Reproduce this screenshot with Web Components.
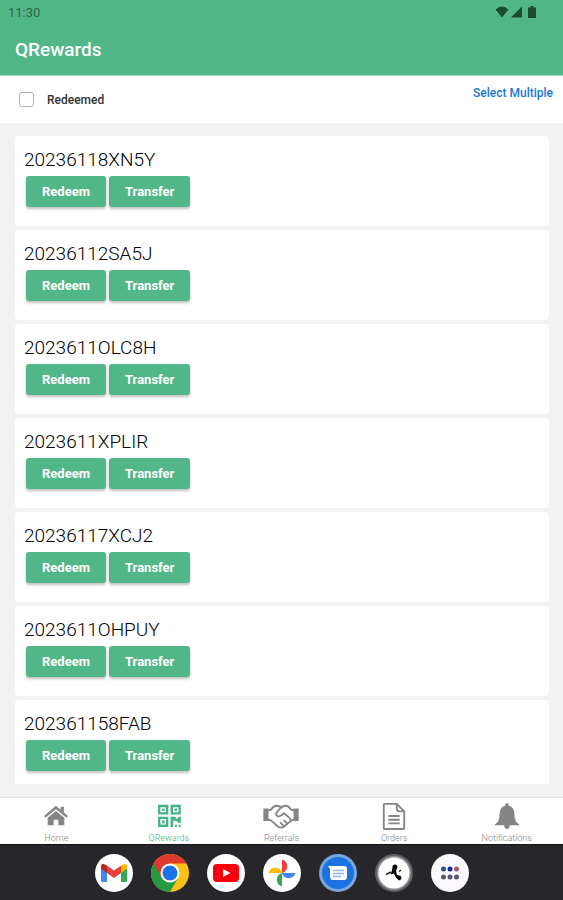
<!DOCTYPE html>
<html lang="en">
<head>
<meta charset="utf-8">
<meta name="viewport" content="width=device-width, initial-scale=1">
<title>QRewards</title>
<style>
  body {
    margin: 0;
    font-family: Roboto, "Liberation Sans", sans-serif;
    background: #f2f2f2;
  }
</style>
</head>
<body>
<rewards-app></rewards-app>

<script>
function define(name, html, setup) {
  const template = document.createElement('template');
  template.innerHTML = html;

  customElements.define(name, class extends HTMLElement {
    constructor() {
      super();
      this.attachShadow({ mode: 'open' });
      this.shadowRoot.appendChild(template.content.cloneNode(true));
    }

    connectedCallback() {
      if (setup) setup(this, this.shadowRoot);
    }
  });
}

define('app-header', `
  <style>
    :host {
      display: block;
      height: 76px;
      box-sizing: border-box;
      background: #52b788;
      border-bottom: 1px solid #a0d5bb;
    }
    .status {
      display: flex;
      align-items: center;
      justify-content: space-between;
      height: 24px;
      padding: 0 24px 0 8px;
      font-size: 13px;
      color: #2c6a4c;
    }
    svg { display: block; fill: #1d4a33; }
    h1 {
      margin: 0;
      padding: 0 15px;
      font-size: 19px;
      font-weight: 500;
      line-height: 52px;
      color: #fff;
    }
  </style>
  <div class="status">
    <span>11:30</span>
    <svg width="44" height="14" viewBox="0 0 44 14" aria-hidden="true">
      <path d="M0.500 4.500Q7-1.500 13.500 4.500L7 12.500Z"/>
      <path d="M27 1.500V12.500H16Z"/>
      <path d="M35.500 1h3v1.500h2.500v10.500h-8V2.500h2.500z"/>
    </svg>
  </div>
  <h1><slot></slot></h1>
`);

define('filter-bar', `
  <style>
    :host {
      display: flex;
      justify-content: space-between;
      height: 47px;
      padding: 0 10px 0 19px;
      background: #fff;
    }
    label {
      display: flex;
      align-items: center;
      gap: 13px;
      font-size: 12px;
      font-weight: 500;
      color: #333;
    }
    input {
      appearance: none;
      width: 15px;
      height: 15px;
      margin: 0;
      border: 1px solid #b4b4b4;
      border-radius: 3px;
      background: #fff;
    }
    input:checked { background: #52b788; }
    a {
      padding-top: 8px;
      font-size: 12px;
      font-weight: 500;
      line-height: 18px;
      color: #1976d2;
      text-decoration: none;
    }
  </style>
  <label><input type="checkbox">Redeemed</label>
  <a href="#select">Select Multiple</a>
`);

define('reward-button', `
  <style>
    :host { display: block; }
    button {
      display: block;
      height: 31px;
      padding: 0 16px;
      border: 0;
      border-radius: 3px;
      background: #52b788;
      box-shadow: 0 2px 3px rgba(0, 0, 0, 0.25);
      color: #fff;
      font: 700 13px/31px Roboto, "Liberation Sans", sans-serif;
    }
  </style>
  <button type="button"><slot></slot></button>
`);

define('reward-card', `
  <style>
    :host {
      display: block;
      flex: none;
      height: 90px;
      padding: 13px 9px 0;
      box-sizing: border-box;
      border-radius: 4px;
      background: #fff;
    }
    h2 {
      margin: 0;
      font-size: 19px;
      font-weight: 300;
      line-height: 22px;
      color: #000;
    }
    .actions {
      display: flex;
      gap: 3px;
      padding: 5px 2px;
    }
  </style>
  <h2><slot></slot></h2>
  <div class="actions">
    <reward-button>Redeem</reward-button>
    <reward-button>Transfer</reward-button>
  </div>
`);

define('reward-list', `
  <style>
    :host {
      display: flex;
      flex: 1;
      flex-direction: column;
      gap: 4px;
      min-height: 0;
      margin: 13px 14px 13px 15px;
      overflow: hidden;
    }
  </style>
  <slot></slot>
`);

const tabIcons = {
  home: `<path fill="currentColor" d="M14 2 1 13l1.800 2L14 5.600 25.200 15l1.800-2-4.500-3.900V3h-3.500v3.200z"/>
    <path fill="currentColor" d="M14 7.500 5 15v8h6.500v-6h5v6H23v-8z"/>`,
  qr: `<g fill="none" stroke="currentColor" stroke-width="2.500">
      <path d="M3.500 2.200h8.500v8H3.500zM17 2.200h8.500v8H17zM3.500 15h8.500v8.500H3.500z"/></g>
    <path fill="currentColor" d="M6.700 5h2.500v2.500H6.700zM20 5h2.500v2.500H20zM6.700 17.500h2.500v3.500H6.700zM15.700 13.800h5l2 3 1.500-3h2.500v6.500h-3l-2-2.300h-3.200v6.800h-2.800zM20.500 22.300h2v2.500h-2zM24.300 22.300h2.400v2.500h-2.400z"/>`,
  hands: `<path fill="currentColor" d="M-5 5h5.500v13.500H-5zM27.500 5H33v13.500h-5.500z"/>
    <g fill="none" stroke="currentColor" stroke-width="2" stroke-linejoin="round" stroke-linecap="round">
      <path d="M.5 7 3.500 6Q6 2 9.500 2q3 0 4.500 2 2-2 5-2 3.500 0 5.500 4l3 1"/>
      <path d="m.5 17 3 1 7.500 6.500q3 2 6 0l8-6.500 2.500-1"/>
      <path d="m14 4-5 5.500q-1 4 3 4 2.500-.500 5-3.500 6 4 8 8M20.500 21l-3-3M17 24l-3.500-3.500"/></g>`,
  page: `<path fill="#fff" stroke="currentColor" stroke-width="2" stroke-linejoin="round" d="M4 0h13l8 8v18q0 1-1 1H4q-1 0-1-1V1q0-1 1-1z"/>
    <path fill="none" stroke="currentColor" stroke-width="2" d="M17 0v5q0 3 3 3h5M8 13h12M8 17h12M8 21h12"/>`,
  bell: `<path fill="currentColor" d="M14-1q2 0 2 3 6 1.500 6 9 0 8 5 11v1H17q0 4-3 4t-3-4H1v-1q5-3 5-11 0-7.500 6-9 0-3 2-3z"/>`
};

define('tab-item', `
  <style>
    :host { display: block; color: #858585; }
    :host([active]) { color: #43b384; }
    a {
      display: flex;
      flex-direction: column;
      align-items: center;
      gap: 4px;
      padding-top: 5px;
      color: inherit;
      font-size: 9px;
      font-weight: 300;
      line-height: 11px;
      text-decoration: none;
    }
    svg { display: block; overflow: visible; }
  </style>
  <a href="#"><svg width="26" height="26" viewBox="0 0 28 26" aria-hidden="true"></svg><span><slot></slot></span></a>
`, (el, root) => {
  root.querySelector('svg').innerHTML = tabIcons[el.getAttribute('icon')];
});

define('tab-bar', `
  <style>
    :host {
      display: grid;
      grid-template-columns: repeat(5, 1fr);
      height: 47px;
      box-sizing: border-box;
      border-top: 1px solid #e2e2e2;
      background: #fff;
    }
  </style>
  <slot></slot>
`);

const dockIcons = {
  Gmail: `<circle cx="20" cy="20" r="19" fill="#fff"/>
    <path fill="#4285f4" d="M7 14v13.500q0 1.500 1.500 1.500H13V18z"/>
    <path fill="#34a853" d="M27 18v11h4.500q1.500 0 1.500-1.500V14z"/>
    <path fill="#fbbc04" d="M27 12.500V20l6-4.500V13q0-2-2-2.300z"/>
    <path fill="#c5221f" d="M7 15.500V13q0-2 2-2.300l4 1.800V20z"/>
    <path fill="#ea4335" d="M13 20v-7.500l-3-2 10 7 10-7-3 2V20l-7 5z"/>`,
  Chrome: `<circle cx="20" cy="20" r="19" fill="#fbc116"/>
    <path fill="#249a41" d="M3.550 10.500A19 19 0 0 0 20 39l8.200-14.300L20 20z"/>
    <path fill="#db3a2c" d="M3.550 10.500a19 19 0 0 1 32.900 0H20v9.500l-8.200 4.700z"/>
    <circle cx="20" cy="20" r="9.500" fill="#fff"/><circle cx="20" cy="20" r="7.500" fill="#1a73e8"/>`,
  YouTube: `<circle cx="20" cy="20" r="19" fill="#fff"/>
    <rect x="7" y="11" width="26" height="18" rx="4" fill="#f8000c"/><path fill="#fff" d="m17 16 7.500 4-7.500 4z"/>`,
  Photos: `<circle cx="20" cy="20" r="19" fill="#fff"/>
    <path fill="#ea4335" d="M20 6.500a7 7 0 0 1 0 13.500z"/><path fill="#4285f4" d="M33.500 20a7 7 0 0 1-13.500 0z"/>
    <path fill="#34a853" d="M20 33.500a7 7 0 0 1 0-13.500z"/><path fill="#fbbc04" d="M6.500 20a7 7 0 0 1 13.500 0z"/>`,
  Messages: `<circle cx="20" cy="20" r="19" fill="#7aa6dd"/><circle cx="20" cy="20" r="16" fill="#1b72e0"/>
    <path fill="#fff" d="M10 13h16q3 0 3 3v8q0 3-3 3H15q-3 0-3-3v-8z"/>
    <path stroke="#8bb6f0" stroke-width="1.500" d="M15 17.500h11M15 20.500h11M15 23.500h8"/>`,
  Runner: `<circle cx="20" cy="20" r="19" fill="#606166"/><circle cx="20" cy="20" r="17" fill="#97989b"/><circle cx="20" cy="20" r="15.500" fill="#fff"/>
    <path d="M18.500 14q0-2.500 2.500-2.500t2.500 2.500l-1.500 4 1 4 4 1 .5 3-2.500 1.500-3-3-2-4-3.500 1 1.500-4z"/>
    <path fill="none" stroke="#222" stroke-width="1.500" d="m12 21.500 5-2.500M25 18.500l2-1.500"/>`,
  Apps: `<circle cx="20" cy="20" r="19" fill="#fbf9ff"/>
    <g fill="#555873"><circle cx="13.500" cy="24" r="2.500"/><circle cx="20" cy="24" r="2.500"/><circle cx="26.500" cy="24" r="2.500"/></g>
    <circle cx="13.500" cy="16" r="2.500" fill="#334b93"/><circle cx="20" cy="16" r="2.500" fill="#172c9b"/><circle cx="26.500" cy="16" r="2.500" fill="#a9566f"/>`
};

define('dock-item', `
  <style>
    :host { display: block; }
    button {
      display: block;
      padding: 0;
      border: 0;
      background: none;
    }
    svg { display: block; }
  </style>
  <button type="button"><svg width="40" height="40" viewBox="0 0 40 40" aria-hidden="true"></svg></button>
`, (el, root) => {
  const app = el.getAttribute('app');
  root.querySelector('button').setAttribute('aria-label', app);
  root.querySelector('svg').innerHTML = dockIcons[app];
});

define('app-dock', `
  <style>
    :host {
      display: flex;
      align-items: center;
      justify-content: center;
      gap: 16px;
      height: 56px;
      box-sizing: border-box;
      border-top: 1px solid #111;
      background: #27272b;
    }
  </style>
  <slot></slot>
`);

define('rewards-app', `
  <style>
    :host {
      display: flex;
      flex-direction: column;
      height: 100vh;
    }
  </style>
  <app-header>QRewards</app-header>
  <filter-bar></filter-bar>
  <reward-list>
    <reward-card>20236118XN5Y</reward-card>
    <reward-card>20236112SA5J</reward-card>
    <reward-card>2023611OLC8H</reward-card>
    <reward-card>2023611XPLIR</reward-card>
    <reward-card>20236117XCJ2</reward-card>
    <reward-card>2023611OHPUY</reward-card>
    <reward-card>202361158FAB</reward-card>
  </reward-list>
  <tab-bar>
    <tab-item icon="home">Home</tab-item>
    <tab-item icon="qr" active>QRewards</tab-item>
    <tab-item icon="hands">Referrals</tab-item>
    <tab-item icon="page">Orders</tab-item>
    <tab-item icon="bell">Notifications</tab-item>
  </tab-bar>
  <app-dock>
    <dock-item app="Gmail"></dock-item>
    <dock-item app="Chrome"></dock-item>
    <dock-item app="YouTube"></dock-item>
    <dock-item app="Photos"></dock-item>
    <dock-item app="Messages"></dock-item>
    <dock-item app="Runner"></dock-item>
    <dock-item app="Apps"></dock-item>
  </app-dock>
`);
</script>
</body>
</html>
